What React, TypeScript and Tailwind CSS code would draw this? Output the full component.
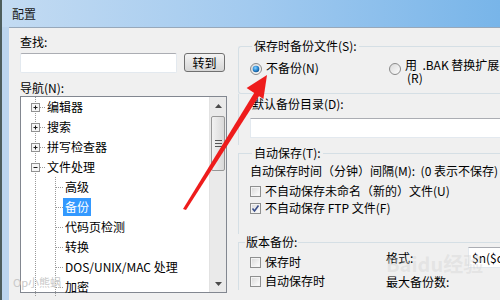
import React from "react";

type Node = { level: 0 | 1; text: string; box?: "+" | "-"; selected?: boolean };

const tree: Node[] = [
  { level: 0, text: "编辑器", box: "+" },
  { level: 0, text: "搜索", box: "+" },
  { level: 0, text: "拼写检查器", box: "+" },
  { level: 0, text: "文件处理", box: "-" },
  { level: 1, text: "高级" },
  { level: 1, text: "备份", selected: true },
  { level: 1, text: "代码页检测" },
  { level: 1, text: "转换" },
  { level: 1, text: "DOS/UNIX/MAC 处理" },
  { level: 1, text: "加密" },
];

function Radio({ on }: { on?: boolean }) {
  return (
    <svg width="12" height="12" viewBox="0 0 12 12" className="shrink-0">
      <defs>
        <linearGradient id={on ? "rOn" : "rOff"} x1="0" y1="0" x2="1" y2="1">
          <stop offset="0" stopColor="#d8d8d8" />
          <stop offset="1" stopColor="#ffffff" />
        </linearGradient>
        <radialGradient id="dot" cx="0.4" cy="0.35" r="0.7">
          <stop offset="0" stopColor="#8fd3ff" />
          <stop offset="0.5" stopColor="#2f8fd8" />
          <stop offset="1" stopColor="#0d4a86" />
        </radialGradient>
      </defs>
      <circle cx="6" cy="6" r="5.5" fill={`url(#${on ? "rOn" : "rOff"})`} stroke="#8a8a8a" />
      {on && <circle cx="6" cy="6" r="3.3" fill="url(#dot)" />}
    </svg>
  );
}

function Check({ on }: { on?: boolean }) {
  return (
    <svg width="11" height="11" viewBox="0 0 11 11" className="shrink-0">
      <defs>
        <linearGradient id="cb" x1="0" y1="0" x2="1" y2="1">
          <stop offset="0" stopColor="#dcdcdc" />
          <stop offset="1" stopColor="#fbfbfb" />
        </linearGradient>
      </defs>
      <rect x="0.5" y="0.5" width="10" height="10" fill="#f4f4f4" stroke="#8e8f8f" />
      <rect x="2" y="2" width="7" height="7" fill="url(#cb)" />
      {on && <path d="M2.5 5.5 L4.5 8 L8.5 2.5" fill="none" stroke="#3b4f8a" strokeWidth="1.6" />}
    </svg>
  );
}

function Gutter({ node }: { node: Node }) {
  const dots = { stroke: "#9a9a9a", strokeDasharray: "1 1", strokeWidth: 1 };
  if (node.level === 0) {
    return (
      <svg width="24" height="20" className="shrink-0">
        <line x1="14.5" y1="0" x2="14.5" y2="20" {...dots} />
        <line x1="19" y1="10.5" x2="24" y2="10.5" {...dots} />
        <rect x="10.5" y="6.5" width="8" height="8" fill="#f6f6f6" stroke="#919191" />
        <line x1="12.5" y1="10.5" x2="16.5" y2="10.5" stroke="#1c1c1c" />
        {node.box === "+" && <line x1="14.5" y1="8.5" x2="14.5" y2="12.5" stroke="#1c1c1c" />}
      </svg>
    );
  }
  return (
    <svg width="42" height="20" className="shrink-0">
      <line x1="14.5" y1="0" x2="14.5" y2="20" {...dots} />
      <line x1="34.5" y1="0" x2="34.5" y2="20" {...dots} />
      <line x1="35" y1="10.5" x2="42" y2="10.5" {...dots} />
    </svg>
  );
}

function Tri({ down }: { down?: boolean }) {
  return (
    <svg width="7" height="4" viewBox="0 0 7 4">
      <path d={down ? "M0 0 H7 L3.5 4 Z" : "M0 4 H7 L3.5 0 Z"} fill="#4a4a4a" />
    </svg>
  );
}

export default function App() {
  return (
    <div className="relative w-[500px] h-[300px] overflow-hidden flex flex-col font-['Noto_Sans_CJK_SC',sans-serif] text-[12px] text-black bg-[#f0f0f0]">
      {/* Title bar */}
      <div className="h-[27px] shrink-0 flex items-center pl-[10px] border-l-2 border-[#4d5d5c] bg-gradient-to-r from-[#c3dbf2] via-[#a2caef] to-[#78b5e9]">
        <span className="text-[12px] text-[#1a1a1a]">配置</span>
      </div>

      <div className="flex flex-1 min-h-0">
        <div className="w-[2px] bg-[#4d5d5c]" />
        <div className="w-[7px] bg-[#bcd5ee]" />

        <div className="flex-1 flex border-t border-[#97a8ba] bg-[#f0f0f0] min-w-0">
          {/* Left column */}
          <div className="w-[218px] shrink-0 pl-[11px] flex flex-col">
            <div className="mt-[6px] leading-[16px]">查找:</div>
            <div className="mt-[3px] flex gap-[7px]">
              <div className="w-[157px] h-[20px] bg-white border border-[#e3e9ef] border-t-[#abadb3] rounded-[2px]" />
              <button className="w-[41px] h-[19px] rounded-[3px] border border-[#707070] bg-gradient-to-b from-[#f4f4f4] to-[#d6d6d6] text-[12px] leading-[17px]">
                转到
              </button>
            </div>
            <div className="mt-[7px] leading-[16px]">导航(N):</div>
            <div className="h-[197px] w-[207px] border border-[#828790] bg-white flex">
              <div className="flex-1 flex flex-col">
                {tree.map((n) => (
                  <div key={n.text} className="h-[20px] flex items-center">
                    <Gutter node={n} />
                    <span
                      className={
                        n.selected
                          ? "h-[18px] leading-[18px] px-[2px] bg-[#3399ff] text-white"
                          : "h-[18px] leading-[18px] px-[2px] whitespace-nowrap"
                      }
                    >
                      {n.text}
                    </span>
                  </div>
                ))}
              </div>
              <div className="w-[17px] shrink-0 flex flex-col bg-[#eaeaea] border-l border-[#e2e2e2]">
                <div className="h-[17px] flex items-center justify-center">
                  <Tri />
                </div>
                <div className="mx-[1px] mt-[2px] h-[55px] rounded-[2px] border border-[#979797] bg-gradient-to-r from-[#f2f2f2] to-[#d9d9d9] flex flex-col items-center justify-center gap-[2px]">
                  <div className="w-[7px] h-[1px] bg-[#555]" />
                  <div className="w-[7px] h-[1px] bg-[#555]" />
                  <div className="w-[7px] h-[1px] bg-[#555]" />
                </div>
                <div className="flex-1" />
                <div className="h-[17px] flex items-center justify-center">
                  <Tri down />
                </div>
              </div>
            </div>
          </div>

          {/* Right column */}
          <div className="ml-[11px] flex-1 min-w-0 pt-[10px] flex flex-col">
            <fieldset className="border border-r-0 border-[#d5dfe5] rounded-l-[3px] pb-[9px]">
              <legend className="ml-[13px] px-[2px] leading-[16px]">保存时备份文件(S):</legend>
              <div className="flex pt-[4px]">
                <div className="w-[150px] pl-[11px] flex items-start shrink-0">
                  <div className="mt-[5px]">
                    <Radio on />
                  </div>
                  <span className="ml-[4px] mt-[2px] leading-[16px]">不备份(N)</span>
                </div>
                <div className="flex items-start">
                  <div className="mt-[5px]">
                    <Radio />
                  </div>
                  <div className="ml-[4px] leading-[13px] whitespace-nowrap">
                    <div>用&nbsp;&nbsp;.BAK 替换扩展名</div>
                    <div className="pl-[2px]">(R)</div>
                  </div>
                </div>
              </div>
            </fieldset>

            <div className="border-l border-[#d5dfe5] pl-[11px] pt-[2px] pb-[7px]">
              <div className="pl-[2px] leading-[16px]">默认备份目录(D):</div>
              <div className="mt-[6px] h-[20px] bg-white border border-r-0 border-[#e3e9ef] border-t-[#abadb3]" />
            </div>

            <fieldset className="border-l border-t border-[#d5dfe5] pb-[18px]">
              <legend className="ml-[13px] px-[2px] leading-[16px]">自动保存(T):</legend>
              <div className="pl-[11px]">
                <div className="mt-[2px] leading-[16px] whitespace-nowrap">自动保存时间（分钟）间隔(M):&nbsp;&nbsp;(0 表示不保存)</div>
                <div className="mt-[4px] flex items-center gap-[4px] leading-[16px]">
                  <Check />
                  <span className="whitespace-nowrap">不自动保存未命名（新的）文件(U)</span>
                </div>
                <div className="mt-[1px] flex items-center gap-[4px] leading-[16px]">
                  <Check on />
                  <span className="whitespace-nowrap">不自动保存 FTP 文件(F)</span>
                </div>
              </div>
            </fieldset>

            <fieldset className="border-l border-t border-[#d5dfe5]">
              <legend className="ml-[6px] px-[1px] leading-[16px]">版本备份:</legend>
              <div className="flex">
                <div className="w-[147px] shrink-0 pl-[11px]">
                  <div className="mt-[4px] flex items-center gap-[4px] leading-[16px]">
                    <Check />
                    <span>保存时</span>
                  </div>
                  <div className="mt-[3px] flex items-center gap-[4px] leading-[16px]">
                    <Check />
                    <span>自动保存时</span>
                  </div>
                </div>
                <div className="flex-1 -mt-[3px]">
                  <div className="flex items-center h-[21px]">
                    <span className="w-[82px] shrink-0">格式:</span>
                    <div className="flex-1 h-[21px] bg-white border border-r-0 border-[#e3e9ef] border-t-[#abadb3] pl-[3px] leading-[19px] whitespace-nowrap overflow-hidden">
                      $n($c)
                    </div>
                  </div>
                  <div className="mt-[6px] leading-[16px]">最大备份数:</div>
                </div>
              </div>
            </fieldset>
          </div>
        </div>
      </div>

      {/* Watermarks */}
      <div className="absolute left-[13px] top-[275px] text-[11px] text-[#c9c9c9] leading-[14px]">Op小熊蜗</div>
      <div className="absolute left-[386px] top-[252px] text-[20px] font-bold text-[#d0d0d0]/40 leading-[24px] whitespace-nowrap">
        Baidu经验
      </div>

      {/* Red arrow */}
      <svg className="absolute inset-0 pointer-events-none" width="500" height="300" viewBox="0 0 500 300">
        <path d="M183 209 L186 210 L261 93 L256 90 Z" fill="#ee1c1c" />
        <path d="M267 75 L246.6 88 L263.4 99 Z" fill="#ee1c1c" />
      </svg>
    </div>
  );
}
